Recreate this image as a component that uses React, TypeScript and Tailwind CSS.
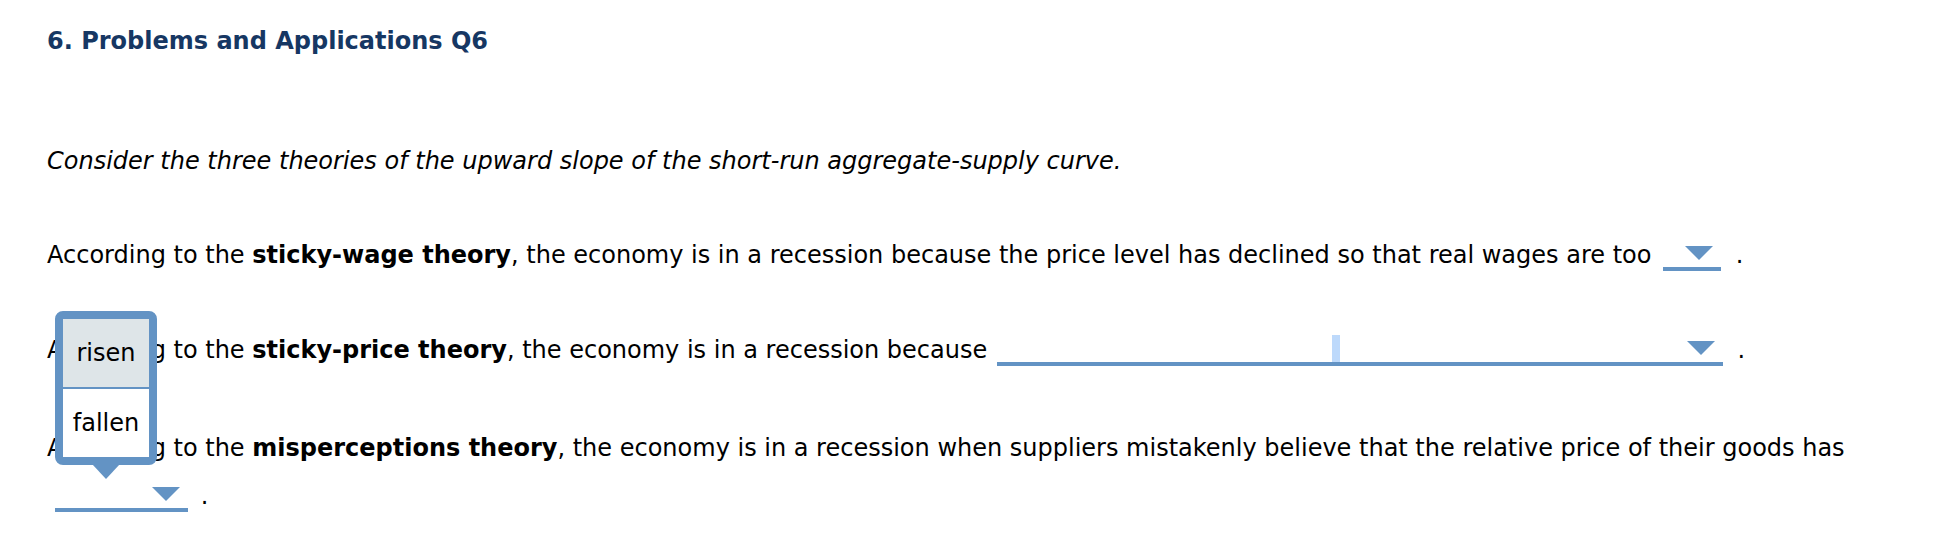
import type { ReactNode } from "react";

interface DropdownProps {
  className: string;
  children?: ReactNode;
}

// underlined select with the blue caret at its right end
const Dropdown = ({ className, children }: DropdownProps) => (
  <span className={`relative inline-block h-[26px] align-[-8px] border-b-4 border-[#6393c4] ${className}`}>
    {children}
    <svg className="absolute right-[8px] bottom-[7px]" width="28" height="14" viewBox="0 0 28 14">
      <polygon points="0,0 28,0 14,14" fill="#6393c4" />
    </svg>
  </span>
);

export default function App() {
  return (
    <div className="relative w-full h-[550px] bg-white text-black font-['DejaVu_Sans',sans-serif] text-[24px] pl-[47px] pt-[26px] overflow-hidden">
      <h1 className="text-[24px] leading-[30px] font-bold text-[#163763]">6. Problems and Applications Q6</h1>

      <p className="mt-[82px] leading-[47px] italic whitespace-nowrap">
        Consider the three theories of the upward slope of the short-run aggregate-supply curve.
      </p>

      <p className="mt-[47px] leading-[47px] whitespace-nowrap">
        According to the <b>sticky-wage theory</b>, the economy is in a recession because the price level has declined so
        that real wages are too <Dropdown className="w-[58px] ml-[4px] mr-[7px]" /> .
      </p>

      <p className="mt-[48px] leading-[47px] whitespace-nowrap">
        According to the <b>sticky-price theory</b>, the economy is in a recession because{" "}
        <Dropdown className="w-[726px] ml-[2px] mr-[7px]">
          <span className="absolute left-[335px] top-[-5px] bottom-0 w-[8px] bg-[#bdd9fb]" />
        </Dropdown>{" "}
        .
      </p>

      <p className="mt-[50px] leading-[48px] whitespace-nowrap">
        According to the <b>misperceptions theory</b>, the economy is in a recession when suppliers mistakenly believe
        that the relative price of their goods has
        <br />
        <Dropdown className="w-[133px] ml-[8px] mr-[5px]" /> .
      </p>

      {/* open option list for the last select */}
      <div className="absolute left-[55px] top-[311px] z-10 flex flex-col items-center">
        <div className="w-[102px] h-[154px] border-8 border-[#6393c4] rounded-[8px] bg-white flex flex-col">
          <div className="h-[68px] bg-[#dee5e8] flex items-center justify-center leading-none">risen</div>
          <div className="h-[2px] bg-[#6393c4]" />
          <div className="h-[68px] flex items-center justify-center leading-none">fallen</div>
        </div>
        <svg className="-mt-px" width="28" height="15" viewBox="0 0 28 15">
          <polygon points="0,0 28,0 14,15" fill="#6393c4" />
        </svg>
      </div>
    </div>
  );
}
